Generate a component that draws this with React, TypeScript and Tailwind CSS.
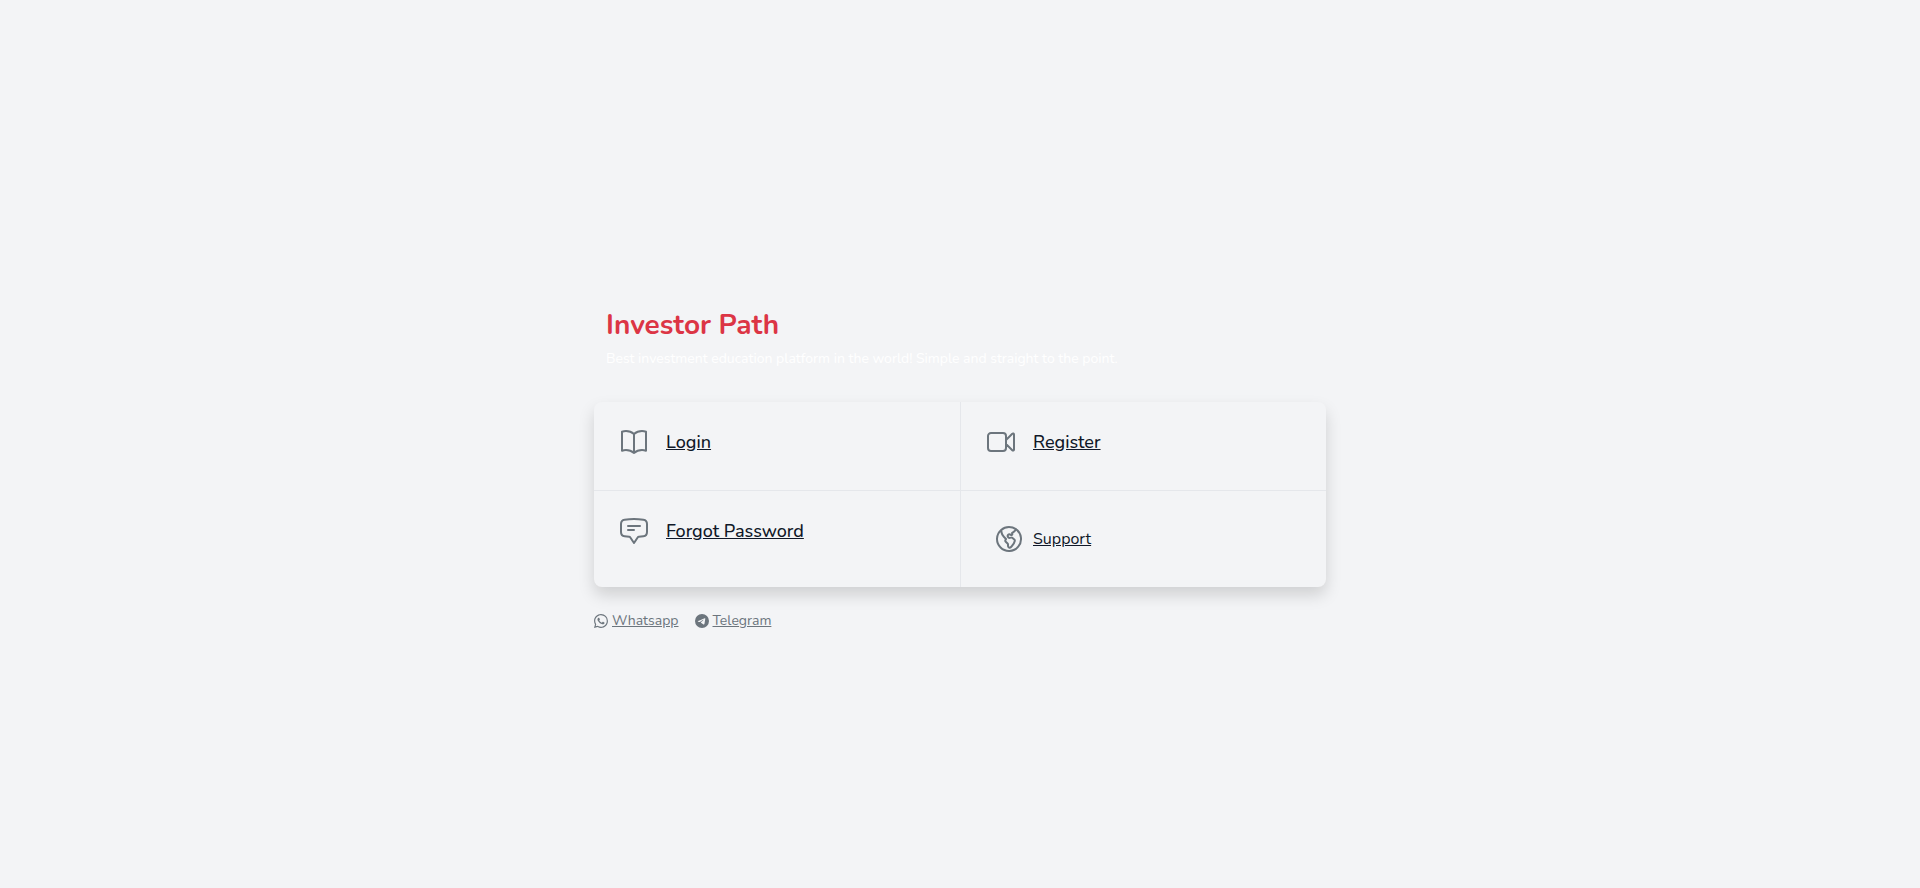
import type { ReactNode } from 'react';
import { BsTelegram, BsWhatsapp } from 'react-icons/bs';

const ICON_PATHS = {
  book: 'M12 6.042A8.967 8.967 0 006 3.75c-1.052 0-2.062.18-3 .512v14.25A8.987 8.987 0 016 18c2.305 0 4.408.867 6 2.292m0-14.25a8.966 8.966 0 016-2.292c1.052 0 2.062.18 3 .512v14.25A8.987 8.987 0 0018 18a8.967 8.967 0 00-6 2.292m0-14.25v14.25',
  video:
    'M15.75 10.5l4.72-4.72a.75.75 0 011.28.53v11.38a.75.75 0 01-1.28.53l-4.72-4.72M4.5 18.75h9a2.25 2.25 0 002.25-2.25v-9a2.25 2.25 0 00-2.25-2.25h-9A2.25 2.25 0 002.25 7.5v9a2.25 2.25 0 002.25 2.25z',
  chat: 'M7.5 8.25h9m-9 3H12m-9.75 1.51c0 1.6 1.123 2.994 2.707 3.227 1.129.166 2.27.293 3.423.379.35.026.67.21.865.501L12 21l2.755-4.133a1.14 1.14 0 01.865-.501 48.172 48.172 0 003.423-.379c1.584-.233 2.707-1.626 2.707-3.228V6.741c0-1.602-1.123-2.995-2.707-3.228A48.394 48.394 0 0012 3c-2.392 0-4.744.175-7.043.513C3.373 3.746 2.25 5.14 2.25 6.741v6.018z',
  globe:
    'M6.115 5.19l.319 1.913A6 6 0 008.11 10.36L9.75 12l-.387.775c-.217.433-.132.956.21 1.298l1.348 1.348c.21.21.329.497.329.795v1.089c0 .426.24.815.622 1.006l.153.076c.433.217.956.132 1.298-.21l.723-.723a8.7 8.7 0 002.288-4.042 1.087 1.087 0 00-.358-1.099l-1.33-1.108c-.251-.21-.582-.299-.905-.245l-1.17.195a1.125 1.125 0 01-.98-.314l-.295-.295a1.125 1.125 0 010-1.591l.13-.132a1.125 1.125 0 011.3-.21l.603.302a.809.809 0 001.086-1.086L14.25 7.5l1.256-.837a4.5 4.5 0 001.528-1.732l.146-.292M6.115 5.19A9 9 0 1017.18 4.64M6.115 5.19A8.965 8.965 0 0112 3c1.929 0 3.716.607 5.18 1.64',
};

function Icon({ name }: { name: keyof typeof ICON_PATHS }) {
  return (
    <svg
      viewBox="0 0 24 24"
      fill="none"
      stroke="currentColor"
      strokeWidth="1.5"
      strokeLinecap="round"
      strokeLinejoin="round"
      className="w-8 h-8 shrink-0 text-[#6c757d]"
      aria-hidden="true"
    >
      <path d={ICON_PATHS[name]} />
    </svg>
  );
}

interface TileProps {
  icon: keyof typeof ICON_PATHS;
  label: string;
  className?: string;
}

function Tile({ icon, label, className = '' }: TileProps) {
  return (
    <div className={`p-6 pb-8 border-gray-200 ${className}`}>
      <div className="flex items-center gap-4">
        <Icon name={icon} />
        <a href="#" className="text-lg leading-7 font-medium text-gray-900 underline">
          {label}
        </a>
      </div>
    </div>
  );
}

function SocialLink({ icon, label }: { icon: ReactNode; label: string }) {
  return (
    <div className="flex items-center gap-1">
      {icon}
      <a href="#" className="underline">
        {label}
      </a>
    </div>
  );
}

export default function App() {
  return (
    <div className="min-h-screen pt-12 flex items-center justify-center bg-gray-100 font-['Nunito','Lato',sans-serif]">
      <main className="w-full max-w-[732px]">
        <header className="px-3 pb-8">
          <h1 className="text-[28px] leading-[38px] font-bold text-[#dc3545]">Investor Path</h1>
          <p className="mt-1 text-sm leading-[22px] text-white">
            Best investment education platform in the world! Simple and straight to the point.
          </p>
        </header>

        <div className="grid grid-cols-1 md:grid-cols-2 rounded-lg overflow-hidden bg-gray-100 shadow-[0_8px_16px_rgba(0,0,0,0.15)]">
          <Tile icon="book" label="Login" />
          <Tile icon="video" label="Register" className="border-l" />
          <Tile icon="chat" label="Forgot Password" className="border-t" />
          <div className="p-8 border-t border-l border-gray-200">
            <div className="flex items-center gap-2">
              <Icon name="globe" />
              <a href="#" className="text-base leading-6 text-gray-900 underline">
                Support
              </a>
            </div>
          </div>
        </div>

        <footer className="mt-6 flex gap-4 text-sm leading-5 text-[#6c757d]">
          <SocialLink icon={<BsWhatsapp aria-hidden="true" />} label="Whatsapp" />
          <SocialLink icon={<BsTelegram aria-hidden="true" />} label="Telegram" />
        </footer>
      </main>
    </div>
  );
}
